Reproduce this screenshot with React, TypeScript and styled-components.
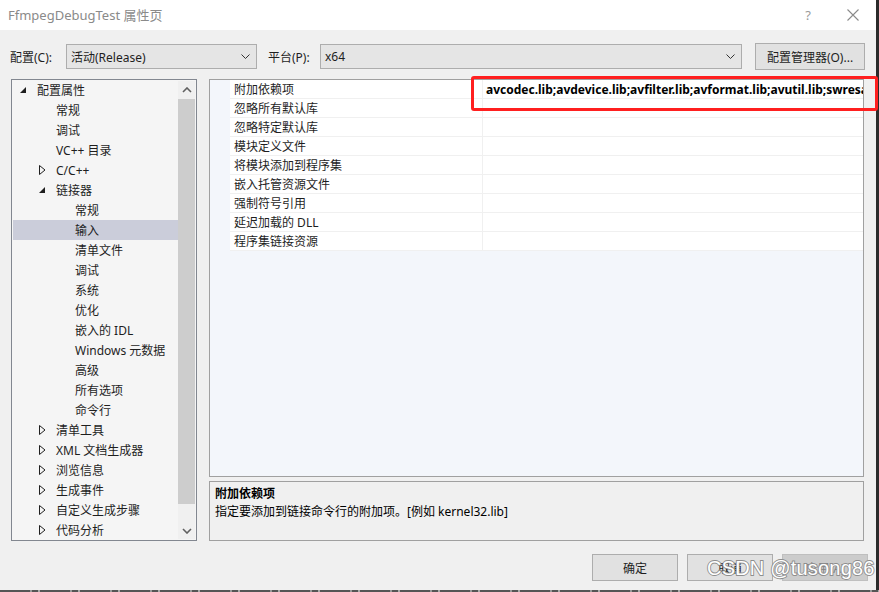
import React from "react";
import styled, { createGlobalStyle } from "styled-components";

const Global = createGlobalStyle`
  html, body { margin: 0; padding: 0; background: #2b2b2b; }
  body { font-family: "Segoe UI", "Noto Sans", "Noto Sans CJK SC", sans-serif; }
  * { box-sizing: border-box; }
`;

const FONT = `"Noto Sans", "Noto Sans CJK SC", sans-serif`;

const Screen = styled.div`
  position: relative;
  width: 879px;
  height: 592px;
  overflow: hidden;
  display: flex;
  background: #2b2b2b;
  font-family: ${FONT};
  font-size: 12px;
  color: #1e1e1e;
`;

const Window = styled.div`
  width: 876px;
  height: 590px;
  display: flex;
  flex-direction: column;
  background: #f0f0f0;
`;

const TitleBar = styled.div`
  height: 30px;
  background: #ffffff;
  display: flex;
  align-items: center;
  padding-left: 8px;
  padding-right: 3px;
`;

const Title = styled.div`
  flex: 1;
  font-size: 13px;
  color: #8a8a8a;
  padding-bottom: 2px;
`;

const TitleBtn = styled.div<{ $w: number }>`
  width: ${(p) => p.$w}px;
  display: flex;
  justify-content: center;
  align-items: center;
  color: #9a9a9a;
  font-size: 13px;
`;

const Body = styled.div`
  flex: 1;
  display: flex;
  flex-direction: column;
  padding: 13px 8px 0 10px;
`;

const ConfigRow = styled.div`
  height: 27px;
  display: flex;
  align-items: center;
`;

const Label = styled.span<{ $w: number }>`
  width: ${(p) => p.$w}px;
  white-space: nowrap;
`;

const Select = styled.div<{ $w: number }>`
  width: ${(p) => p.$w}px;
  height: 25px;
  border: 1px solid #adadad;
  background: #e5e5e5;
  display: flex;
  align-items: center;
  padding-left: 4px;
  padding-right: 6px;
  justify-content: space-between;
`;

const PushButton = styled.div<{ $w: number; $disabled?: boolean }>`
  width: ${(p) => p.$w}px;
  height: 27px;
  border: 1px solid ${(p) => (p.$disabled ? "#bfbfbf" : "#adadad")};
  background: ${(p) => (p.$disabled ? "#cccccc" : "#e1e1e1")};
  color: ${(p) => (p.$disabled ? "#838383" : "#1e1e1e")};
  display: flex;
  align-items: center;
  justify-content: center;
`;

const Main = styled.div`
  margin-top: 9px;
  height: 462px;
  display: flex;
  gap: 12px;
  padding-left: 1px;
`;

const TreePanel = styled.div`
  width: 186px;
  border: 1px solid #828790;
  background: #f5f5f5;
  display: flex;
`;

const TreeList = styled.div`
  flex: 1;
  padding-left: 1px;
  overflow: hidden;
`;

const TreeRow = styled.div<{ $level: number; $selected?: boolean }>`
  height: 20px;
  display: flex;
  align-items: center;
  padding-left: ${(p) => 7 + p.$level * 19}px;
  background: ${(p) => (p.$selected ? "#cbcdda" : "transparent")};
  white-space: nowrap;
`;

const Arrow = styled.span`
  width: 17px;
  height: 20px;
  display: flex;
  align-items: center;
  flex-shrink: 0;
`;

const ScrollBar = styled.div`
  width: 17px;
  background: #f0f0f0;
  display: flex;
  flex-direction: column;
  align-items: stretch;
  margin: 1px 1px 1px 0;
`;

const ScrollArrow = styled.div`
  height: 17px;
  display: flex;
  align-items: center;
  justify-content: center;
`;

const ScrollThumb = styled.div`
  margin-top: 1px;
  height: 405px;
  background: #cdcdcd;
`;

const ScrollSpacer = styled.div`
  flex: 1;
`;

const RightCol = styled.div`
  width: 655px;
  display: flex;
  flex-direction: column;
  gap: 4px;
`;

const Grid = styled.div`
  height: 398px;
  border: 1px solid #a0a0a0;
  background: #f3f6fb;
  padding-left: 20px;
  overflow: hidden;
`;

const PropRow = styled.div`
  height: 19px;
  display: grid;
  grid-template-columns: 253px 1fr;
  background: #ffffff;
  border-bottom: 1px solid #f0f0f0;
`;

const PropName = styled.div`
  padding-left: 4px;
  display: flex;
  align-items: center;
  border-right: 1px solid #f0f0f0;
  white-space: nowrap;
`;

const PropValue = styled.div<{ $bold?: boolean }>`
  padding-left: 3px;
  display: flex;
  align-items: center;
  white-space: nowrap;
  overflow: hidden;
  font-weight: ${(p) => (p.$bold ? 700 : 400)};
  color: #000;
`;

const Desc = styled.div`
  height: 60px;
  border: 1px solid #a0a0a0;
  background: #f0f0f0;
  padding: 3px 5px;
  display: flex;
  flex-direction: column;
`;

const DescTitle = styled.div`
  font-weight: 700;
  height: 18px;
  line-height: 18px;
  color: #000;
`;

const DescText = styled.div`
  height: 18px;
  line-height: 18px;
  color: #000;
`;

const Footer = styled.div`
  margin-top: 13px;
  display: flex;
  justify-content: flex-end;
  gap: 9px;
`;

const BottomEdge = styled.div`
  position: absolute;
  left: 0;
  bottom: 0;
  width: 879px;
  height: 2px;
  background: repeating-linear-gradient(90deg, #555 0 30px, #999 30px 32px, #555 32px 38px, #aaa 38px 40px);
`;

const Annotation = styled.div`
  position: absolute;
  left: 471px;
  top: 76px;
  width: 407px;
  height: 35px;
  border: 3px solid #ff1f1f;
  border-radius: 3px;
  pointer-events: none;
`;

const Watermark = styled.div`
  position: absolute;
  left: 707px;
  top: 557px;
  font-family: "Liberation Sans", Arial, sans-serif;
  font-size: 20px;
  color: #ffffff;
  -webkit-text-stroke: 1.8px #8e8e8e;
  paint-order: stroke fill;
  letter-spacing: 0.2px;
  white-space: nowrap;
  pointer-events: none;
`;

const Expanded = () => (
  <svg width="7" height="7" viewBox="0 0 7 7">
    <polygon points="6,0 6,6 0,6" fill="#1e1e1e" />
  </svg>
);

const Collapsed = () => (
  <svg width="7" height="10" viewBox="0 0 7 10">
    <polygon points="0.5,0.5 6,5 0.5,9.5" fill="none" stroke="#1e1e1e" strokeWidth="1" />
  </svg>
);

const Chevron = ({ up }: { up?: boolean }) => (
  <svg width="10" height="6" viewBox="0 0 10 6">
    <polyline points={up ? "1,5 5,1 9,5" : "1,1 5,5 9,1"} fill="none" stroke="#606060" strokeWidth="1.6" />
  </svg>
);

const SelChevron = () => (
  <svg width="9" height="5" viewBox="0 0 9 5">
    <polyline points="0.5,0.5 4.5,4.5 8.5,0.5" fill="none" stroke="#333" strokeWidth="1" />
  </svg>
);

type Node = { label: string; level: number; arrow?: "open" | "closed"; selected?: boolean };

const tree: Node[] = [
  { label: "配置属性", level: 0, arrow: "open" },
  { label: "常规", level: 1 },
  { label: "调试", level: 1 },
  { label: "VC++ 目录", level: 1 },
  { label: "C/C++", level: 1, arrow: "closed" },
  { label: "链接器", level: 1, arrow: "open" },
  { label: "常规", level: 2 },
  { label: "输入", level: 2, selected: true },
  { label: "清单文件", level: 2 },
  { label: "调试", level: 2 },
  { label: "系统", level: 2 },
  { label: "优化", level: 2 },
  { label: "嵌入的 IDL", level: 2 },
  { label: "Windows 元数据", level: 2 },
  { label: "高级", level: 2 },
  { label: "所有选项", level: 2 },
  { label: "命令行", level: 2 },
  { label: "清单工具", level: 1, arrow: "closed" },
  { label: "XML 文档生成器", level: 1, arrow: "closed" },
  { label: "浏览信息", level: 1, arrow: "closed" },
  { label: "生成事件", level: 1, arrow: "closed" },
  { label: "自定义生成步骤", level: 1, arrow: "closed" },
  { label: "代码分析", level: 1, arrow: "closed" },
];

const props: { name: string; value?: string }[] = [
  { name: "附加依赖项", value: "avcodec.lib;avdevice.lib;avfilter.lib;avformat.lib;avutil.lib;swresample.lib;swscale.lib" },
  { name: "忽略所有默认库" },
  { name: "忽略特定默认库" },
  { name: "模块定义文件" },
  { name: "将模块添加到程序集" },
  { name: "嵌入托管资源文件" },
  { name: "强制符号引用" },
  { name: "延迟加载的 DLL" },
  { name: "程序集链接资源" },
];

export default function App() {
  return (
    <Screen>
      <Global />
      <Window>
        <TitleBar>
          <Title>FfmpegDebugTest 属性页</Title>
          <TitleBtn $w={20}>?</TitleBtn>
          <TitleBtn $w={15} />
          <TitleBtn $w={40}>
            <svg width="12" height="12" viewBox="0 0 12 12">
              <path d="M0.5 0.5 L11.5 11.5 M11.5 0.5 L0.5 11.5" stroke="#8a8a8a" strokeWidth="1.1" />
            </svg>
          </TitleBtn>
        </TitleBar>
        <Body>
          <ConfigRow>
            <Label $w={56}>配置(C):</Label>
            <Select $w={191}>
              <span>活动(Release)</span>
              <SelChevron />
            </Select>
            <Label $w={11} />
            <Label $w={52}>平台(P):</Label>
            <Select $w={422}>
              <span>x64</span>
              <SelChevron />
            </Select>
            <Label $w={13} />
            <PushButton $w={110}>配置管理器(O)...</PushButton>
          </ConfigRow>
          <Main>
            <TreePanel>
              <TreeList>
                {tree.map((n, i) => (
                  <TreeRow key={i} $level={n.level} $selected={n.selected}>
                    <Arrow>
                      {n.arrow === "open" ? <Expanded /> : n.arrow === "closed" ? <Collapsed /> : null}
                    </Arrow>
                    <span>{n.label}</span>
                  </TreeRow>
                ))}
              </TreeList>
              <ScrollBar>
                <ScrollArrow>
                  <Chevron up />
                </ScrollArrow>
                <ScrollThumb />
                <ScrollSpacer />
                <ScrollArrow>
                  <Chevron />
                </ScrollArrow>
              </ScrollBar>
            </TreePanel>
            <RightCol>
              <Grid>
                {props.map((p, i) => (
                  <PropRow key={i}>
                    <PropName>{p.name}</PropName>
                    <PropValue $bold={!!p.value}>{p.value ?? ""}</PropValue>
                  </PropRow>
                ))}
              </Grid>
              <Desc>
                <DescTitle>附加依赖项</DescTitle>
                <DescText>指定要添加到链接命令行的附加项。[例如 kernel32.lib]</DescText>
              </Desc>
            </RightCol>
          </Main>
          <Footer>
            <PushButton $w={86}>确定</PushButton>
            <PushButton $w={86}>取消</PushButton>
            <PushButton $w={86} $disabled>应用(A)</PushButton>
          </Footer>
        </Body>
      </Window>
      <Annotation />
      <Watermark>CSDN @tusong86</Watermark>
      <BottomEdge />
    </Screen>
  );
}
